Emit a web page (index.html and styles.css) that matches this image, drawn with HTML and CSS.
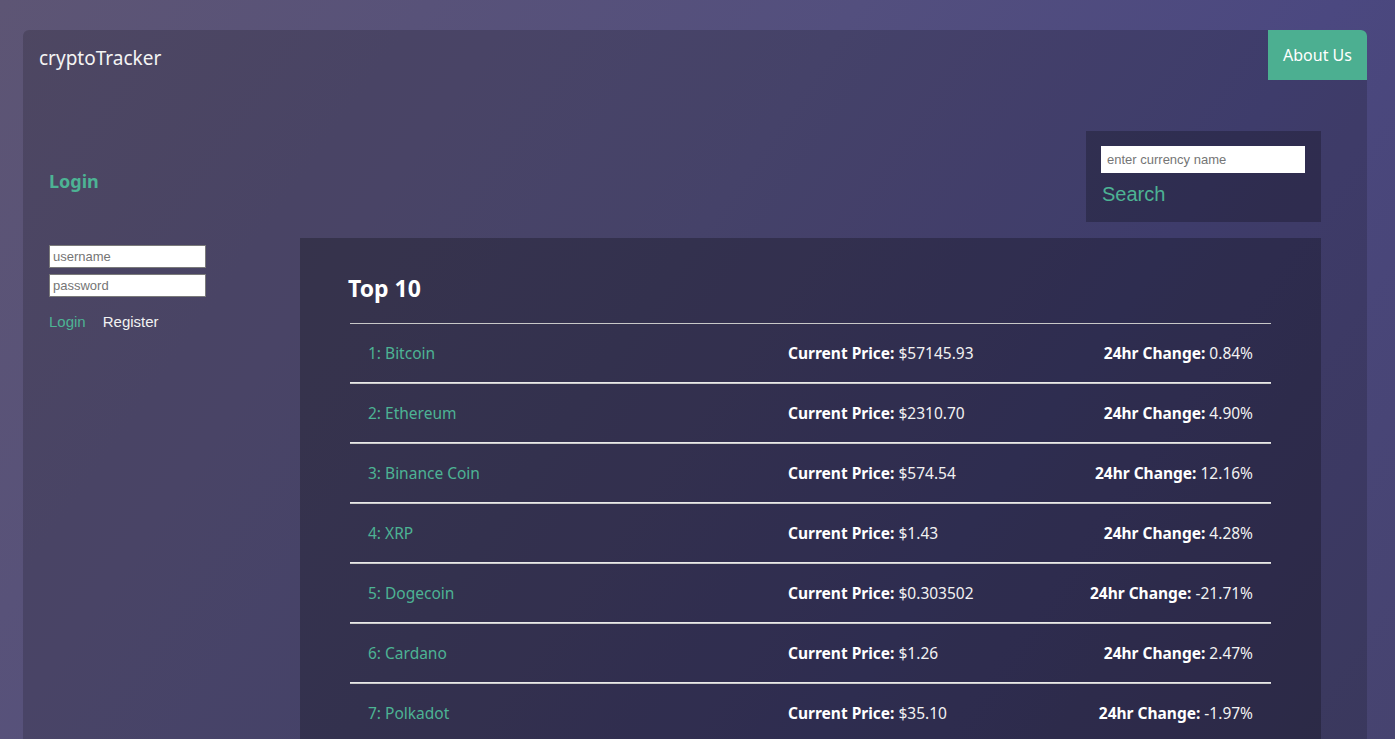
FILE: index.html
```html
<!DOCTYPE html>
<html lang="en">
<head>
<meta charset="utf-8">
<title>cryptoTracker</title>
<link rel="stylesheet" href="styles.css">
</head>
<body>
<div class="app">
  <header class="topbar">
    <div class="brand">cryptoTracker</div>
    <a class="about" href="#">About Us</a>
  </header>
  <div class="content">
    <aside class="sidebar">
      <h2 class="login-title">Login</h2>
      <form class="login-form">
        <input class="field" type="text" placeholder="username">
        <input class="field" type="password" placeholder="password">
        <div class="auth-links">
          <a class="link-login" href="#">Login</a>
          <a class="link-register" href="#">Register</a>
        </div>
      </form>
    </aside>
    <main class="main">
      <div class="search-row">
        <div class="search-box">
          <input class="search-input" type="text" placeholder="enter currency name">
          <a class="search-btn" href="#">Search</a>
        </div>
      </div>
      <section class="panel">
        <h1 class="panel-title">Top 10</h1>
        <div class="list">
          <div class="row"><span class="name">1: Bitcoin</span><span class="price"><b>Current Price:</b> $57145.93</span><span class="change"><b>24hr Change:</b> 0.84%</span></div>
          <div class="row"><span class="name">2: Ethereum</span><span class="price"><b>Current Price:</b> $2310.70</span><span class="change"><b>24hr Change:</b> 4.90%</span></div>
          <div class="row"><span class="name">3: Binance Coin</span><span class="price"><b>Current Price:</b> $574.54</span><span class="change"><b>24hr Change:</b> 12.16%</span></div>
          <div class="row"><span class="name">4: XRP</span><span class="price"><b>Current Price:</b> $1.43</span><span class="change"><b>24hr Change:</b> 4.28%</span></div>
          <div class="row"><span class="name">5: Dogecoin</span><span class="price"><b>Current Price:</b> $0.303502</span><span class="change"><b>24hr Change:</b> -21.71%</span></div>
          <div class="row"><span class="name">6: Cardano</span><span class="price"><b>Current Price:</b> $1.26</span><span class="change"><b>24hr Change:</b> 2.47%</span></div>
          <div class="row"><span class="name">7: Polkadot</span><span class="price"><b>Current Price:</b> $35.10</span><span class="change"><b>24hr Change:</b> -1.97%</span></div>
        </div>
      </section>
    </main>
  </div>
</div>
</body>
</html>
```

FILE: styles.css
```css
html, body {
  margin: 0;
  height: 100%;
}
body {
  background: linear-gradient(125deg, #5d5574 0%, #534f7e 45%, #4b4880 70%, #46436f 100%);
  background-attachment: fixed;
  font-family: "Noto Sans", "DejaVu Sans", sans-serif;
  color: #fff;
  overflow: hidden;
}
.app {
  margin: 30px 28px 0 23px;
  background: rgba(0, 0, 0, 0.16);
  border-radius: 6px 6px 0 0;
  overflow: hidden;
  min-height: 760px;
}
.topbar {
  display: flex;
  justify-content: space-between;
  align-items: flex-start;
  height: 50px;
}
.brand {
  padding: 15px 0 0 16px;
  font-size: 19px;
  line-height: 26px;
  color: #f4f4f4;
}
.about {
  display: flex;
  align-items: center;
  justify-content: center;
  width: 99px;
  height: 50px;
  background: #4caf91;
  color: #fff;
  text-decoration: none;
  font-size: 16px;
}
.content {
  display: grid;
  grid-template-columns: 251px 1021px;
  padding: 0 46px 0 26px;
}
.sidebar {
  padding-top: 89px;
}
.login-title {
  margin: 0;
  font-size: 18px;
  line-height: 24px;
  font-weight: 700;
  color: #4db394;
}
.login-form {
  display: flex;
  flex-direction: column;
  align-items: flex-start;
  gap: 6px;
  margin-top: 52px;
}
.field {
  box-sizing: border-box;
  width: 157px;
  height: 23px;
  margin: 0;
  padding: 0 3px;
  border: 1px solid #7a7a7a;
  border-radius: 0;
  background: #fff;
  font-family: "Liberation Sans", Arial, sans-serif;
  font-size: 13px;
  color: #333;
}
.field::placeholder,
.search-input::placeholder {
  color: #757575;
}
.auth-links {
  display: flex;
  gap: 17px;
  margin-top: 9px;
  font-family: "Liberation Sans", Arial, sans-serif;
  font-size: 15px;
  line-height: 20px;
}
.auth-links a {
  text-decoration: none;
}
.link-login {
  color: #4db394;
}
.link-register {
  color: #f2f2f2;
}
.main {
  display: flex;
  flex-direction: column;
  padding-top: 51px;
}
.search-row {
  display: flex;
  justify-content: flex-end;
}
.search-box {
  box-sizing: border-box;
  width: 235px;
  height: 91px;
  padding: 15px 16px 0 15px;
  background: rgba(0, 0, 0, 0.24);
}
.search-input {
  display: block;
  box-sizing: border-box;
  width: 204px;
  height: 27px;
  margin: 0;
  padding: 0 6px;
  border: none;
  background: #fff;
  font-family: "Liberation Sans", Arial, sans-serif;
  font-size: 13px;
}
.search-btn {
  display: block;
  margin-top: 8px;
  padding-left: 1px;
  font-family: "Liberation Sans", Arial, sans-serif;
  font-size: 20px;
  line-height: 26px;
  color: #4db394;
  text-decoration: none;
}
.panel {
  margin-top: 16px;
  padding: 36px 50px 40px 48px;
  background: rgba(0, 0, 0, 0.25);
}
.panel-title {
  margin: 0;
  font-size: 23px;
  line-height: 28px;
  font-weight: 700;
  color: #fff;
}
.list {
  margin: 21px 0 0 2px;
}
.row {
  display: grid;
  grid-template-columns: 420px 1fr auto;
  align-items: center;
  height: 58px;
  padding: 0 18px;
  border-top: 1px solid #c8c8c8;
  border-bottom: 1px solid #e8e8e8;
  margin-bottom: -2px;
  font-size: 15.5px;
}
.row + .row {
  margin-top: 2px;
}
.name {
  color: #4db394;
}
.price, .change {
  color: #f2f2f2;
}
.price b, .change b {
  font-weight: 700;
  color: #fff;
}
```
